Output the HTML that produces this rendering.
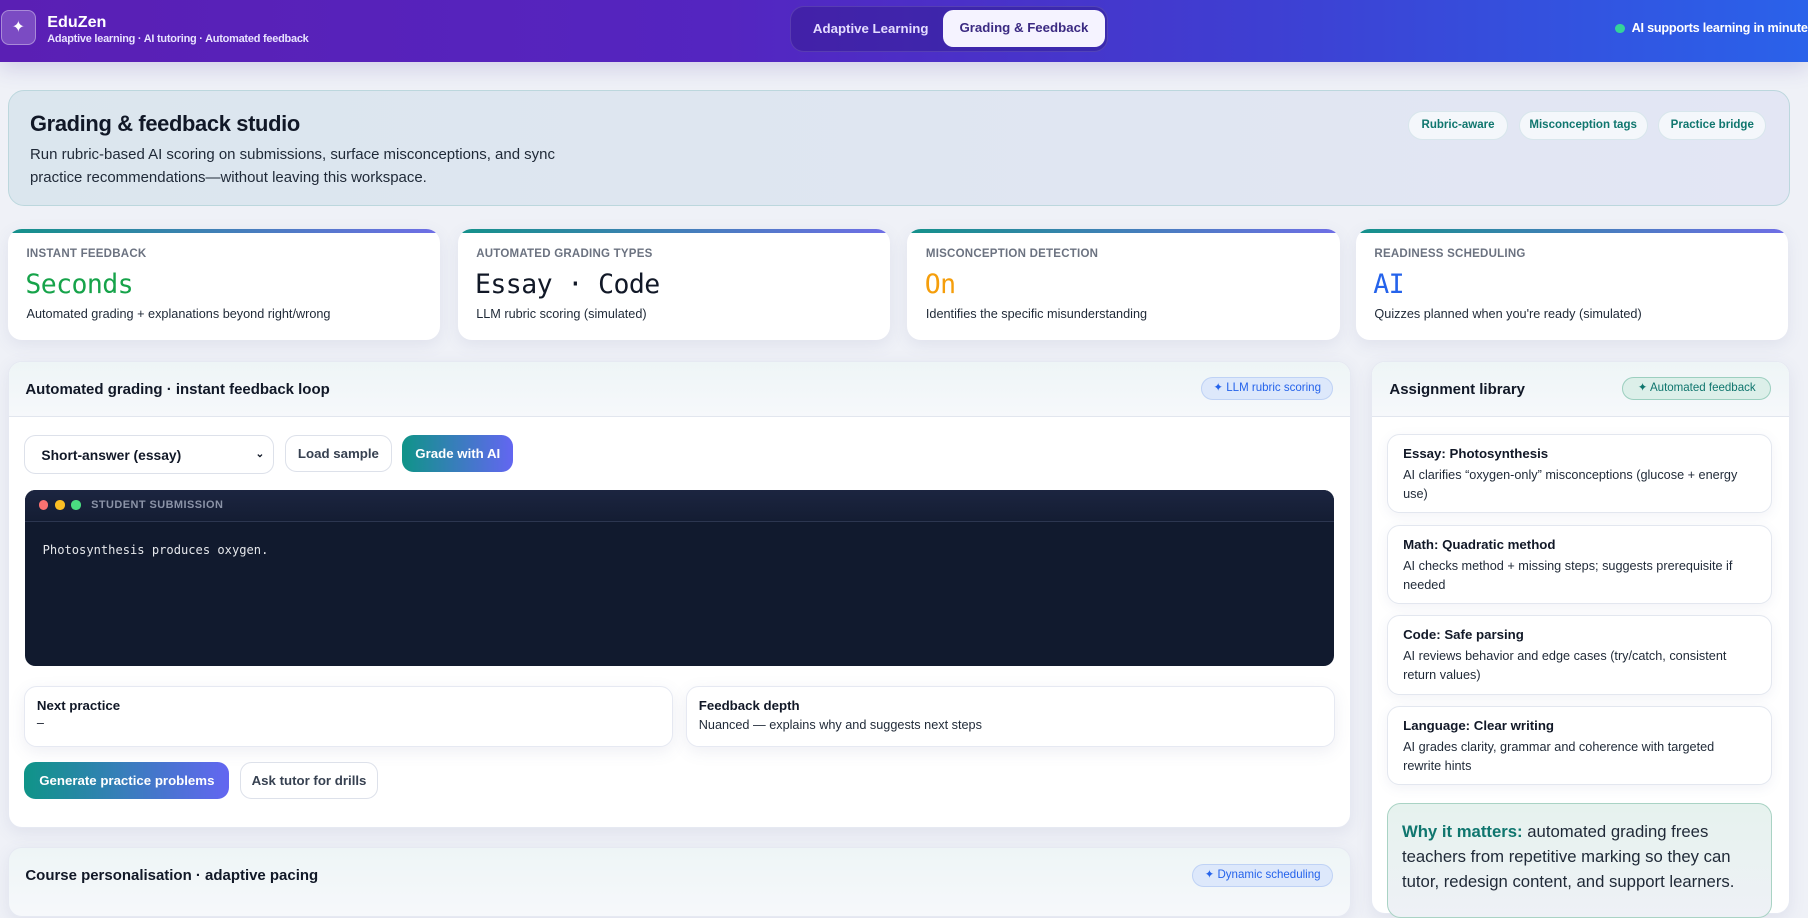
<!DOCTYPE html>
<html><head><meta charset="utf-8"><style>
html{zoom:1.15306}
*{box-sizing:border-box;margin:0;padding:0}
body{width:1568px;height:774px;overflow:hidden;background:#eff1f7;font-family:"Liberation Sans",sans-serif;color:#111827;position:relative}
.abs{position:absolute}
.hdr{left:0;top:0;width:1568px;height:54px;background:linear-gradient(90deg,#5a1fb4 0%,#5425c0 40%,#3e3fd2 70%,#2a62ea 100%);box-shadow:0 6px 18px rgba(80,60,160,.18)}
.logo{left:1px;top:9px;width:30px;height:30px;border-radius:7px;background:rgba(255,255,255,.2);border:1px solid rgba(255,255,255,.35);color:#fff;font-size:14px;text-align:center;line-height:28px}
.card{background:#fff;border-radius:12px;box-shadow:0 4px 14px rgba(90,100,150,.1);border:1px solid #e6e9f2}
.chip{top:96px;height:25px;border-radius:13px;background:#f4f7fb;border:1px solid #d8e6ec;color:#0f766e;font-size:10px;font-weight:bold;text-align:center;line-height:23px}
.stat{top:199px;width:375px;height:96px;border-radius:12px;background:#fff;box-shadow:0 4px 14px rgba(90,100,150,.1);overflow:hidden}
.stat:before{content:"";position:absolute;left:0;top:0;right:0;height:3px;background:linear-gradient(90deg,#14918a,#6f6ee6)}
.stat .l{position:absolute;left:16px;top:16px;font-size:10px;font-weight:bold;color:#6b7280;letter-spacing:.2px}
.stat .v{position:absolute;left:15px;top:34px;font-family:"DejaVu Sans Mono","Liberation Mono",monospace;font-size:23px;letter-spacing:-.5px}
.stat .d{position:absolute;left:16px;top:67px;font-size:11px;color:#1f2937}
.btn{height:32px;border-radius:10px;border:1px solid #dde1ea;background:#fff;font-size:11.5px;font-weight:bold;color:#374151;text-align:center;line-height:31px}
.grad{background:linear-gradient(90deg,#0f9488,#6366f1);color:#fff;border:none;line-height:33px}
.badge{height:20px;border-radius:10px;font-size:10px;text-align:center;line-height:18px}
.item{left:1203px;width:334px;border-radius:11px;background:#fff;border:1px solid #e3e7ef;box-shadow:0 3px 10px rgba(90,100,150,.08);padding:10px 18px 10px 13px}
.item b{display:block;font-size:11.5px;margin-bottom:4px}
.item p{font-size:11px;line-height:17px;color:#1f2937}
</style></head><body>
<div class="abs hdr"></div>
<div class="abs logo">✦</div>
<div class="abs" style="left:41px;top:11px;color:#fff;font-size:14px;font-weight:bold">EduZen</div>
<div class="abs" style="left:41px;top:29px;color:#e9e3ff;font-size:9.5px;font-weight:bold;letter-spacing:-.2px">Adaptive learning · AI tutoring · Automated feedback</div>
<div class="abs" style="left:685px;top:5px;width:276px;height:40px;border-radius:12px;background:rgba(40,20,120,.35);border:1px solid rgba(255,255,255,.12)"></div>
<div class="abs" style="left:705px;top:18px;color:#e4dcff;font-size:11.5px;font-weight:bold">Adaptive Learning</div>
<div class="abs" style="left:818px;top:9px;width:140px;height:32px;border-radius:9px;background:#f5f3ff;color:#3b2a82;font-size:11.5px;font-weight:bold;text-align:center;line-height:31px">Grading &amp; Feedback</div>
<div class="abs" style="left:1401px;top:21px;width:8px;height:8px;border-radius:50%;background:#34d399"></div>
<div class="abs" style="left:1415px;top:18px;color:#fff;font-size:11px;font-weight:bold;white-space:nowrap;letter-spacing:-.2px">AI supports learning in minutes</div>

<div class="abs" style="left:7px;top:78px;width:1545px;height:101px;border-radius:14px;background:linear-gradient(90deg,#dbe6ee,#e3e6f4);border:1px solid #bcd7dd"></div>
<div class="abs" style="left:26px;top:96px;font-size:19px;font-weight:bold;letter-spacing:-.3px">Grading &amp; feedback studio</div>
<div class="abs" style="left:26px;top:124px;font-size:13px;line-height:20px;color:#1f2937;width:500px">Run rubric-based AI scoring on submissions, surface misconceptions, and sync practice recommendations—without leaving this workspace.</div>
<div class="abs chip" style="left:1221px;width:87px">Rubric-aware</div>
<div class="abs chip" style="left:1317px;width:112px">Misconception tags</div>
<div class="abs chip" style="left:1438px;width:94px">Practice bridge</div>

<div class="abs stat" style="left:7px"><div class="l">INSTANT FEEDBACK</div><div class="v" style="color:#16a34a">Seconds</div><div class="d">Automated grading + explanations beyond right/wrong</div></div>
<div class="abs stat" style="left:397px"><div class="l">AUTOMATED GRADING TYPES</div><div class="v">Essay · Code</div><div class="d">LLM rubric scoring (simulated)</div></div>
<div class="abs stat" style="left:787px"><div class="l">MISCONCEPTION DETECTION</div><div class="v" style="color:#f59e0b">On</div><div class="d">Identifies the specific misunderstanding</div></div>
<div class="abs stat" style="left:1176px"><div class="l">READINESS SCHEDULING</div><div class="v" style="color:#2563eb">AI</div><div class="d">Quizzes planned when you're ready (simulated)</div></div>

<div class="abs card" style="left:7px;top:313px;width:1165px;height:405px;overflow:hidden">
 <div style="height:48px;background:linear-gradient(180deg,#eef5f6,#f6f8fb);border-bottom:1px solid #e2e6ee"></div>
</div>
<div class="abs" style="left:22px;top:330px;font-size:13px;font-weight:bold">Automated grading · instant feedback loop</div>
<div class="abs badge" style="left:1042px;top:327px;width:114px;background:#dde8fb;border:1px solid #bfd2f5;color:#2563eb">✦ LLM rubric scoring</div>
<div class="abs btn" style="left:21px;top:377px;width:217px;height:34px;text-align:left;padding-left:14px;color:#111827;font-size:12px;line-height:33px">Short-answer (essay)<span style="position:absolute;right:8px;font-size:9px">⌄</span></div>
<div class="abs btn" style="left:247px;top:377px;width:93px">Load sample</div>
<div class="abs btn grad" style="left:349px;top:377px;width:96px">Grade with AI</div>
<div class="abs" style="left:22px;top:425px;width:1135px;height:153px;border-radius:9px;background:#111a2e;overflow:hidden">
 <div style="height:28px;background:linear-gradient(180deg,#1c2540,#141d33);border-bottom:1px solid #2c3650"></div>
</div>
<div class="abs" style="left:34px;top:434px;width:8px;height:8px;border-radius:50%;background:#f87171"></div>
<div class="abs" style="left:48px;top:434px;width:8px;height:8px;border-radius:50%;background:#fbbf24"></div>
<div class="abs" style="left:62px;top:434px;width:8px;height:8px;border-radius:50%;background:#4ade80"></div>
<div class="abs" style="left:79px;top:433px;font-size:9.5px;font-weight:bold;color:#8b93a7;letter-spacing:.4px">STUDENT SUBMISSION</div>
<div class="abs" style="left:37px;top:471px;font-family:'DejaVu Sans Mono','Liberation Mono',monospace;font-size:10.5px;color:#e5e7eb">Photosynthesis produces oxygen.</div>
<div class="abs card" style="left:21px;top:595px;width:563px;height:53px;border-radius:11px"></div>
<div class="abs" style="left:32px;top:605px;font-size:11.5px;font-weight:bold">Next practice</div>
<div class="abs" style="left:32px;top:621px;font-size:11px">–</div>
<div class="abs card" style="left:595px;top:595px;width:563px;height:53px;border-radius:11px"></div>
<div class="abs" style="left:606px;top:605px;font-size:11.5px;font-weight:bold">Feedback depth</div>
<div class="abs" style="left:606px;top:623px;font-size:11px;color:#1f2937">Nuanced — explains why and suggests next steps</div>
<div class="abs btn grad" style="left:21px;top:661px;width:178px">Generate practice problems</div>
<div class="abs btn" style="left:208px;top:661px;width:120px">Ask tutor for drills</div>

<div class="abs card" style="left:7px;top:735px;width:1165px;height:60px;background:linear-gradient(180deg,#eef5f6,#f6f8fb)"></div>
<div class="abs" style="left:22px;top:752px;font-size:13px;font-weight:bold">Course personalisation · adaptive pacing</div>
<div class="abs badge" style="left:1034px;top:749px;width:122px;background:#dde8fb;border:1px solid #bfd2f5;color:#2563eb">✦ Dynamic scheduling</div>

<div class="abs card" style="left:1189px;top:313px;width:363px;height:480px;overflow:hidden">
 <div style="height:48px;background:linear-gradient(180deg,#eef5f6,#f6f8fb);border-bottom:1px solid #e2e6ee"></div>
</div>
<div class="abs" style="left:1205px;top:330px;font-size:13px;font-weight:bold">Assignment library</div>
<div class="abs badge" style="left:1407px;top:327px;width:129px;background:#dcefe9;border:1px solid #9ccfbf;color:#0f766e">✦ Automated feedback</div>
<div class="abs item" style="top:376px;height:69px"><b>Essay: Photosynthesis</b><p>AI clarifies “oxygen-only” misconceptions (glucose + energy use)</p></div>
<div class="abs item" style="top:455px;height:69px"><b>Math: Quadratic method</b><p>AI checks method + missing steps; suggests prerequisite if needed</p></div>
<div class="abs item" style="top:533px;height:70px"><b>Code: Safe parsing</b><p>AI reviews behavior and edge cases (try/catch, consistent return values)</p></div>
<div class="abs item" style="top:612px;height:69px"><b>Language: Clear writing</b><p>AI grades clarity, grammar and coherence with targeted rewrite hints</p></div>
<div class="abs" style="left:1203px;top:696px;width:334px;height:100px;border-radius:12px;background:linear-gradient(180deg,#e6f2ee,#eef1f6);border:1px solid #a9d3c4;padding:13px 12px;font-size:14.5px;line-height:22px;color:#1f2937"><b style="color:#0f766e">Why it matters:</b> automated grading frees teachers from repetitive marking so they can tutor, redesign content, and support learners.</div>
</body></html>
